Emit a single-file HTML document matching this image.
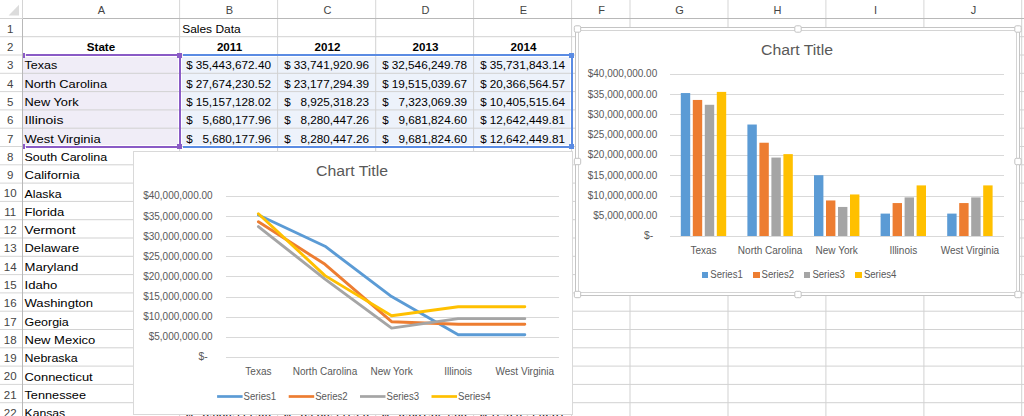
<!DOCTYPE html>
<html><head><meta charset="utf-8"><title>Sales Data</title>
<style>html,body{margin:0;padding:0;background:#fff;} body{width:1024px;height:416px;overflow:hidden;font-family:"Liberation Sans",sans-serif;} svg{display:block} text{shape-rendering:auto} polyline,line{shape-rendering:geometricPrecision}</style>
</head><body>
<svg width="1024" height="416" viewBox="0 0 1024 416" font-family='"Liberation Sans", sans-serif' shape-rendering="crispEdges"><rect x="0" y="0" width="1024" height="416" fill="#ffffff" />
<rect x="23" y="57" width="155" height="88" fill="#f0edf7" />
<rect x="182" y="57" width="388" height="88" fill="#edf2fb" />
<rect x="23" y="36.20" width="1001" height="1" fill="#d2d2d2" style="shape-rendering:geometricPrecision"/>
<rect x="0" y="36.20" width="22" height="1" fill="#d6d6d6" style="shape-rendering:geometricPrecision"/>
<rect x="23" y="54.50" width="1001" height="1" fill="#d2d2d2" style="shape-rendering:geometricPrecision"/>
<rect x="0" y="54.50" width="22" height="1" fill="#d6d6d6" style="shape-rendering:geometricPrecision"/>
<rect x="23" y="72.80" width="1001" height="1" fill="#d2d2d2" style="shape-rendering:geometricPrecision"/>
<rect x="0" y="72.80" width="22" height="1" fill="#d6d6d6" style="shape-rendering:geometricPrecision"/>
<rect x="23" y="91.10" width="1001" height="1" fill="#d2d2d2" style="shape-rendering:geometricPrecision"/>
<rect x="0" y="91.10" width="22" height="1" fill="#d6d6d6" style="shape-rendering:geometricPrecision"/>
<rect x="23" y="109.40" width="1001" height="1" fill="#d2d2d2" style="shape-rendering:geometricPrecision"/>
<rect x="0" y="109.40" width="22" height="1" fill="#d6d6d6" style="shape-rendering:geometricPrecision"/>
<rect x="23" y="127.70" width="1001" height="1" fill="#d2d2d2" style="shape-rendering:geometricPrecision"/>
<rect x="0" y="127.70" width="22" height="1" fill="#d6d6d6" style="shape-rendering:geometricPrecision"/>
<rect x="23" y="146.00" width="1001" height="1" fill="#d2d2d2" style="shape-rendering:geometricPrecision"/>
<rect x="0" y="146.00" width="22" height="1" fill="#d6d6d6" style="shape-rendering:geometricPrecision"/>
<rect x="23" y="164.30" width="1001" height="1" fill="#d2d2d2" style="shape-rendering:geometricPrecision"/>
<rect x="0" y="164.30" width="22" height="1" fill="#d6d6d6" style="shape-rendering:geometricPrecision"/>
<rect x="23" y="182.60" width="1001" height="1" fill="#d2d2d2" style="shape-rendering:geometricPrecision"/>
<rect x="0" y="182.60" width="22" height="1" fill="#d6d6d6" style="shape-rendering:geometricPrecision"/>
<rect x="23" y="200.90" width="1001" height="1" fill="#d2d2d2" style="shape-rendering:geometricPrecision"/>
<rect x="0" y="200.90" width="22" height="1" fill="#d6d6d6" style="shape-rendering:geometricPrecision"/>
<rect x="23" y="219.20" width="1001" height="1" fill="#d2d2d2" style="shape-rendering:geometricPrecision"/>
<rect x="0" y="219.20" width="22" height="1" fill="#d6d6d6" style="shape-rendering:geometricPrecision"/>
<rect x="23" y="237.50" width="1001" height="1" fill="#d2d2d2" style="shape-rendering:geometricPrecision"/>
<rect x="0" y="237.50" width="22" height="1" fill="#d6d6d6" style="shape-rendering:geometricPrecision"/>
<rect x="23" y="255.80" width="1001" height="1" fill="#d2d2d2" style="shape-rendering:geometricPrecision"/>
<rect x="0" y="255.80" width="22" height="1" fill="#d6d6d6" style="shape-rendering:geometricPrecision"/>
<rect x="23" y="274.10" width="1001" height="1" fill="#d2d2d2" style="shape-rendering:geometricPrecision"/>
<rect x="0" y="274.10" width="22" height="1" fill="#d6d6d6" style="shape-rendering:geometricPrecision"/>
<rect x="23" y="292.40" width="1001" height="1" fill="#d2d2d2" style="shape-rendering:geometricPrecision"/>
<rect x="0" y="292.40" width="22" height="1" fill="#d6d6d6" style="shape-rendering:geometricPrecision"/>
<rect x="23" y="310.70" width="1001" height="1" fill="#d2d2d2" style="shape-rendering:geometricPrecision"/>
<rect x="0" y="310.70" width="22" height="1" fill="#d6d6d6" style="shape-rendering:geometricPrecision"/>
<rect x="23" y="329.00" width="1001" height="1" fill="#d2d2d2" style="shape-rendering:geometricPrecision"/>
<rect x="0" y="329.00" width="22" height="1" fill="#d6d6d6" style="shape-rendering:geometricPrecision"/>
<rect x="23" y="347.30" width="1001" height="1" fill="#d2d2d2" style="shape-rendering:geometricPrecision"/>
<rect x="0" y="347.30" width="22" height="1" fill="#d6d6d6" style="shape-rendering:geometricPrecision"/>
<rect x="23" y="365.60" width="1001" height="1" fill="#d2d2d2" style="shape-rendering:geometricPrecision"/>
<rect x="0" y="365.60" width="22" height="1" fill="#d6d6d6" style="shape-rendering:geometricPrecision"/>
<rect x="23" y="383.90" width="1001" height="1" fill="#d2d2d2" style="shape-rendering:geometricPrecision"/>
<rect x="0" y="383.90" width="22" height="1" fill="#d6d6d6" style="shape-rendering:geometricPrecision"/>
<rect x="23" y="402.20" width="1001" height="1" fill="#d2d2d2" style="shape-rendering:geometricPrecision"/>
<rect x="0" y="402.20" width="22" height="1" fill="#d6d6d6" style="shape-rendering:geometricPrecision"/>
<rect x="179.10" y="19" width="1" height="397" fill="#d2d2d2" style="shape-rendering:geometricPrecision"/>
<rect x="179.10" y="0" width="1" height="18" fill="#d6d6d6" style="shape-rendering:geometricPrecision"/>
<rect x="277.10" y="19" width="1" height="397" fill="#d2d2d2" style="shape-rendering:geometricPrecision"/>
<rect x="277.10" y="0" width="1" height="18" fill="#d6d6d6" style="shape-rendering:geometricPrecision"/>
<rect x="375.20" y="19" width="1" height="397" fill="#d2d2d2" style="shape-rendering:geometricPrecision"/>
<rect x="375.20" y="0" width="1" height="18" fill="#d6d6d6" style="shape-rendering:geometricPrecision"/>
<rect x="473.10" y="19" width="1" height="397" fill="#d2d2d2" style="shape-rendering:geometricPrecision"/>
<rect x="473.10" y="0" width="1" height="18" fill="#d6d6d6" style="shape-rendering:geometricPrecision"/>
<rect x="571.10" y="19" width="1" height="397" fill="#d2d2d2" style="shape-rendering:geometricPrecision"/>
<rect x="571.10" y="0" width="1" height="18" fill="#d6d6d6" style="shape-rendering:geometricPrecision"/>
<rect x="629.50" y="19" width="1" height="397" fill="#d2d2d2" style="shape-rendering:geometricPrecision"/>
<rect x="629.50" y="0" width="1" height="18" fill="#d6d6d6" style="shape-rendering:geometricPrecision"/>
<rect x="727.50" y="19" width="1" height="397" fill="#d2d2d2" style="shape-rendering:geometricPrecision"/>
<rect x="727.50" y="0" width="1" height="18" fill="#d6d6d6" style="shape-rendering:geometricPrecision"/>
<rect x="825.40" y="19" width="1" height="397" fill="#d2d2d2" style="shape-rendering:geometricPrecision"/>
<rect x="825.40" y="0" width="1" height="18" fill="#d6d6d6" style="shape-rendering:geometricPrecision"/>
<rect x="923.40" y="19" width="1" height="397" fill="#d2d2d2" style="shape-rendering:geometricPrecision"/>
<rect x="923.40" y="0" width="1" height="18" fill="#d6d6d6" style="shape-rendering:geometricPrecision"/>
<rect x="1021.20" y="19" width="1" height="397" fill="#d2d2d2" style="shape-rendering:geometricPrecision"/>
<rect x="1021.20" y="0" width="1" height="18" fill="#d6d6d6" style="shape-rendering:geometricPrecision"/>
<rect x="23" y="18" width="1001" height="1" fill="#b8b8b8" />
<rect x="0" y="18" width="22" height="1" fill="#d4d4d4" />
<rect x="22" y="19" width="1" height="397" fill="#b8b8b8" />
<rect x="22" y="0" width="1" height="19" fill="#d4d4d4" />
<polygon points="8.6,15.6 19,15.6 19,4.8" fill="#dcdcdc" style="shape-rendering:geometricPrecision"/>
<text x="101.50" y="13.60" font-size="11" fill="#444444" text-anchor="middle" >A</text>
<text x="229.50" y="13.60" font-size="11" fill="#444444" text-anchor="middle" >B</text>
<text x="327.50" y="13.60" font-size="11" fill="#444444" text-anchor="middle" >C</text>
<text x="425.50" y="13.60" font-size="11" fill="#444444" text-anchor="middle" >D</text>
<text x="523.50" y="13.60" font-size="11" fill="#444444" text-anchor="middle" >E</text>
<text x="601.50" y="13.60" font-size="11" fill="#444444" text-anchor="middle" >F</text>
<text x="679.50" y="13.60" font-size="11" fill="#444444" text-anchor="middle" >G</text>
<text x="777.50" y="13.60" font-size="11" fill="#444444" text-anchor="middle" >H</text>
<text x="875.50" y="13.60" font-size="11" fill="#444444" text-anchor="middle" >I</text>
<text x="973.50" y="13.60" font-size="11" fill="#444444" text-anchor="middle" >J</text>
<text x="10.20" y="32.70" font-size="11.5" fill="#444444" text-anchor="middle" >1</text>
<text x="10.20" y="51.00" font-size="11.5" fill="#444444" text-anchor="middle" >2</text>
<text x="10.20" y="69.30" font-size="11.5" fill="#444444" text-anchor="middle" >3</text>
<text x="10.20" y="87.60" font-size="11.5" fill="#444444" text-anchor="middle" >4</text>
<text x="10.20" y="105.90" font-size="11.5" fill="#444444" text-anchor="middle" >5</text>
<text x="10.20" y="124.20" font-size="11.5" fill="#444444" text-anchor="middle" >6</text>
<text x="10.20" y="142.50" font-size="11.5" fill="#444444" text-anchor="middle" >7</text>
<text x="10.20" y="160.80" font-size="11.5" fill="#444444" text-anchor="middle" >8</text>
<text x="10.20" y="179.10" font-size="11.5" fill="#444444" text-anchor="middle" >9</text>
<text x="10.20" y="197.40" font-size="11.5" fill="#444444" text-anchor="middle" >10</text>
<text x="10.20" y="215.70" font-size="11.5" fill="#444444" text-anchor="middle" >11</text>
<text x="10.20" y="234.00" font-size="11.5" fill="#444444" text-anchor="middle" >12</text>
<text x="10.20" y="252.30" font-size="11.5" fill="#444444" text-anchor="middle" >13</text>
<text x="10.20" y="270.60" font-size="11.5" fill="#444444" text-anchor="middle" >14</text>
<text x="10.20" y="288.90" font-size="11.5" fill="#444444" text-anchor="middle" >15</text>
<text x="10.20" y="307.20" font-size="11.5" fill="#444444" text-anchor="middle" >16</text>
<text x="10.20" y="325.50" font-size="11.5" fill="#444444" text-anchor="middle" >17</text>
<text x="10.20" y="343.80" font-size="11.5" fill="#444444" text-anchor="middle" >18</text>
<text x="10.20" y="362.10" font-size="11.5" fill="#444444" text-anchor="middle" >19</text>
<text x="10.20" y="380.40" font-size="11.5" fill="#444444" text-anchor="middle" >20</text>
<text x="10.20" y="398.70" font-size="11.5" fill="#444444" text-anchor="middle" >21</text>
<text x="10.20" y="417.00" font-size="11.5" fill="#444444" text-anchor="middle" >22</text>
<text x="182.20" y="32.80" font-size="11.6" fill="#000" textLength="58.50" lengthAdjust="spacingAndGlyphs" >Sales Data</text>
<text x="101.00" y="51.10" font-size="11.6" fill="#000" text-anchor="middle" font-weight="bold" >State</text>
<text x="229.50" y="51.10" font-size="11.6" fill="#000" text-anchor="middle" font-weight="bold" >2011</text>
<text x="327.50" y="51.10" font-size="11.6" fill="#000" text-anchor="middle" font-weight="bold" >2012</text>
<text x="425.50" y="51.10" font-size="11.6" fill="#000" text-anchor="middle" font-weight="bold" >2013</text>
<text x="523.50" y="51.10" font-size="11.6" fill="#000" text-anchor="middle" font-weight="bold" >2014</text>
<text x="24.50" y="69.40" font-size="11.6" fill="#000" textLength="32.70" lengthAdjust="spacingAndGlyphs" >Texas</text>
<text x="24.50" y="87.70" font-size="11.6" fill="#000" textLength="82.50" lengthAdjust="spacingAndGlyphs" >North Carolina</text>
<text x="24.50" y="106.00" font-size="11.6" fill="#000" textLength="54.20" lengthAdjust="spacingAndGlyphs" >New York</text>
<text x="24.50" y="124.30" font-size="11.6" fill="#000" textLength="39.00" lengthAdjust="spacingAndGlyphs" >Illinois</text>
<text x="24.50" y="142.60" font-size="11.6" fill="#000" textLength="76.20" lengthAdjust="spacingAndGlyphs" >West Virginia</text>
<text x="24.50" y="160.90" font-size="11.6" fill="#000" textLength="82.70" lengthAdjust="spacingAndGlyphs" >South Carolina</text>
<text x="24.50" y="179.20" font-size="11.6" fill="#000" textLength="55.20" lengthAdjust="spacingAndGlyphs" >California</text>
<text x="24.50" y="197.50" font-size="11.6" fill="#000" textLength="37.00" lengthAdjust="spacingAndGlyphs" >Alaska</text>
<text x="24.50" y="215.80" font-size="11.6" fill="#000" textLength="39.80" lengthAdjust="spacingAndGlyphs" >Florida</text>
<text x="24.50" y="234.10" font-size="11.6" fill="#000" textLength="51.10" lengthAdjust="spacingAndGlyphs" >Vermont</text>
<text x="24.50" y="252.40" font-size="11.6" fill="#000" textLength="54.60" lengthAdjust="spacingAndGlyphs" >Delaware</text>
<text x="24.50" y="270.70" font-size="11.6" fill="#000" textLength="53.90" lengthAdjust="spacingAndGlyphs" >Maryland</text>
<text x="24.50" y="289.00" font-size="11.6" fill="#000" textLength="32.80" lengthAdjust="spacingAndGlyphs" >Idaho</text>
<text x="24.50" y="307.30" font-size="11.6" fill="#000" textLength="68.60" lengthAdjust="spacingAndGlyphs" >Washington</text>
<text x="24.50" y="325.60" font-size="11.6" fill="#000" textLength="44.30" lengthAdjust="spacingAndGlyphs" >Georgia</text>
<text x="24.50" y="343.90" font-size="11.6" fill="#000" textLength="70.80" lengthAdjust="spacingAndGlyphs" >New Mexico</text>
<text x="24.50" y="362.20" font-size="11.6" fill="#000" textLength="53.20" lengthAdjust="spacingAndGlyphs" >Nebraska</text>
<text x="24.50" y="380.50" font-size="11.6" fill="#000" textLength="68.20" lengthAdjust="spacingAndGlyphs" >Connecticut</text>
<text x="24.50" y="398.80" font-size="11.6" fill="#000" textLength="61.50" lengthAdjust="spacingAndGlyphs" >Tennessee</text>
<text x="24.50" y="417.10" font-size="11.6" fill="#000" textLength="40.70" lengthAdjust="spacingAndGlyphs" >Kansas</text>
<text x="186.20" y="69.40" font-size="11.6" fill="#000" >$</text>
<text x="271.00" y="69.40" font-size="11.6" fill="#000" text-anchor="end" textLength="75.34" lengthAdjust="spacingAndGlyphs" >35,443,672.40</text>
<text x="284.20" y="69.40" font-size="11.6" fill="#000" >$</text>
<text x="369.00" y="69.40" font-size="11.6" fill="#000" text-anchor="end" textLength="75.34" lengthAdjust="spacingAndGlyphs" >33,741,920.96</text>
<text x="382.20" y="69.40" font-size="11.6" fill="#000" >$</text>
<text x="467.00" y="69.40" font-size="11.6" fill="#000" text-anchor="end" textLength="75.34" lengthAdjust="spacingAndGlyphs" >32,546,249.78</text>
<text x="480.20" y="69.40" font-size="11.6" fill="#000" >$</text>
<text x="565.00" y="69.40" font-size="11.6" fill="#000" text-anchor="end" textLength="75.34" lengthAdjust="spacingAndGlyphs" >35,731,843.14</text>
<text x="186.20" y="87.70" font-size="11.6" fill="#000" >$</text>
<text x="271.00" y="87.70" font-size="11.6" fill="#000" text-anchor="end" textLength="75.34" lengthAdjust="spacingAndGlyphs" >27,674,230.52</text>
<text x="284.20" y="87.70" font-size="11.6" fill="#000" >$</text>
<text x="369.00" y="87.70" font-size="11.6" fill="#000" text-anchor="end" textLength="75.34" lengthAdjust="spacingAndGlyphs" >23,177,294.39</text>
<text x="382.20" y="87.70" font-size="11.6" fill="#000" >$</text>
<text x="467.00" y="87.70" font-size="11.6" fill="#000" text-anchor="end" textLength="75.34" lengthAdjust="spacingAndGlyphs" >19,515,039.67</text>
<text x="480.20" y="87.70" font-size="11.6" fill="#000" >$</text>
<text x="565.00" y="87.70" font-size="11.6" fill="#000" text-anchor="end" textLength="75.34" lengthAdjust="spacingAndGlyphs" >20,366,564.57</text>
<text x="186.20" y="106.00" font-size="11.6" fill="#000" >$</text>
<text x="271.00" y="106.00" font-size="11.6" fill="#000" text-anchor="end" textLength="75.34" lengthAdjust="spacingAndGlyphs" >15,157,128.02</text>
<text x="284.20" y="106.00" font-size="11.6" fill="#000" >$</text>
<text x="369.00" y="106.00" font-size="11.6" fill="#000" text-anchor="end" textLength="68.56" lengthAdjust="spacingAndGlyphs" >8,925,318.23</text>
<text x="382.20" y="106.00" font-size="11.6" fill="#000" >$</text>
<text x="467.00" y="106.00" font-size="11.6" fill="#000" text-anchor="end" textLength="68.56" lengthAdjust="spacingAndGlyphs" >7,323,069.39</text>
<text x="480.20" y="106.00" font-size="11.6" fill="#000" >$</text>
<text x="565.00" y="106.00" font-size="11.6" fill="#000" text-anchor="end" textLength="75.34" lengthAdjust="spacingAndGlyphs" >10,405,515.64</text>
<text x="186.20" y="124.30" font-size="11.6" fill="#000" >$</text>
<text x="271.00" y="124.30" font-size="11.6" fill="#000" text-anchor="end" textLength="68.56" lengthAdjust="spacingAndGlyphs" >5,680,177.96</text>
<text x="284.20" y="124.30" font-size="11.6" fill="#000" >$</text>
<text x="369.00" y="124.30" font-size="11.6" fill="#000" text-anchor="end" textLength="68.56" lengthAdjust="spacingAndGlyphs" >8,280,447.26</text>
<text x="382.20" y="124.30" font-size="11.6" fill="#000" >$</text>
<text x="467.00" y="124.30" font-size="11.6" fill="#000" text-anchor="end" textLength="68.56" lengthAdjust="spacingAndGlyphs" >9,681,824.60</text>
<text x="480.20" y="124.30" font-size="11.6" fill="#000" >$</text>
<text x="565.00" y="124.30" font-size="11.6" fill="#000" text-anchor="end" textLength="75.34" lengthAdjust="spacingAndGlyphs" >12,642,449.81</text>
<text x="186.20" y="142.60" font-size="11.6" fill="#000" >$</text>
<text x="271.00" y="142.60" font-size="11.6" fill="#000" text-anchor="end" textLength="68.56" lengthAdjust="spacingAndGlyphs" >5,680,177.96</text>
<text x="284.20" y="142.60" font-size="11.6" fill="#000" >$</text>
<text x="369.00" y="142.60" font-size="11.6" fill="#000" text-anchor="end" textLength="68.56" lengthAdjust="spacingAndGlyphs" >8,280,447.26</text>
<text x="382.20" y="142.60" font-size="11.6" fill="#000" >$</text>
<text x="467.00" y="142.60" font-size="11.6" fill="#000" text-anchor="end" textLength="68.56" lengthAdjust="spacingAndGlyphs" >9,681,824.60</text>
<text x="480.20" y="142.60" font-size="11.6" fill="#000" >$</text>
<text x="565.00" y="142.60" font-size="11.6" fill="#000" text-anchor="end" textLength="75.34" lengthAdjust="spacingAndGlyphs" >12,642,449.81</text>
<text x="186.20" y="417.10" font-size="11.6" fill="#000" >$</text>
<text x="271.00" y="417.10" font-size="11.6" fill="#000" text-anchor="end" textLength="68.56" lengthAdjust="spacingAndGlyphs" >5,680,177.96</text>
<text x="284.20" y="417.10" font-size="11.6" fill="#000" >$</text>
<text x="369.00" y="417.10" font-size="11.6" fill="#000" text-anchor="end" textLength="68.56" lengthAdjust="spacingAndGlyphs" >8,280,447.26</text>
<text x="382.20" y="417.10" font-size="11.6" fill="#000" >$</text>
<text x="467.00" y="417.10" font-size="11.6" fill="#000" text-anchor="end" textLength="68.56" lengthAdjust="spacingAndGlyphs" >9,681,824.60</text>
<text x="480.20" y="417.10" font-size="11.6" fill="#000" >$</text>
<text x="565.00" y="417.10" font-size="11.6" fill="#000" text-anchor="end" textLength="75.34" lengthAdjust="spacingAndGlyphs" >12,642,449.81</text>
<rect x="26" y="54" width="154" height="2" fill="#8a5bc6" />
<rect x="26" y="146" width="154" height="2" fill="#8a5bc6" />
<rect x="179" y="54" width="2" height="94" fill="#8a5bc6" />
<rect x="177" y="53" width="5" height="5" fill="#8a5bc6" />
<rect x="177" y="144" width="5" height="5" fill="#8a5bc6" />
<rect x="23" y="53" width="2" height="5" fill="#8a5bc6" />
<rect x="23" y="144" width="2" height="5" fill="#8a5bc6" />
<rect x="183" y="54" width="389" height="2" fill="#5a8be3" />
<rect x="183" y="146" width="389" height="2" fill="#5a8be3" />
<rect x="571" y="54" width="2" height="94" fill="#5a8be3" />
<rect x="569" y="53" width="5" height="5" fill="#5a8be3" />
<rect x="569" y="144" width="5" height="5" fill="#5a8be3" />
<rect x="133.5" y="151.5" width="439" height="263" fill="#ffffff" stroke="#d9d9d9" stroke-width="1"/>
<text x="352.00" y="176.20" font-size="15.3" fill="#595959" text-anchor="middle" textLength="72.00" lengthAdjust="spacingAndGlyphs" >Chart Title</text>
<rect x="226" y="196" width="333" height="1" fill="#d9d9d9" />
<text x="212.60" y="199.40" font-size="10" fill="#595959" text-anchor="end" textLength="69.44" lengthAdjust="spacingAndGlyphs" >$40,000,000.00</text>
<rect x="226" y="216" width="333" height="1" fill="#d9d9d9" />
<text x="212.60" y="219.53" font-size="10" fill="#595959" text-anchor="end" textLength="69.44" lengthAdjust="spacingAndGlyphs" >$35,000,000.00</text>
<rect x="226" y="236" width="333" height="1" fill="#d9d9d9" />
<text x="212.60" y="239.65" font-size="10" fill="#595959" text-anchor="end" textLength="69.44" lengthAdjust="spacingAndGlyphs" >$30,000,000.00</text>
<rect x="226" y="256" width="333" height="1" fill="#d9d9d9" />
<text x="212.60" y="259.77" font-size="10" fill="#595959" text-anchor="end" textLength="69.44" lengthAdjust="spacingAndGlyphs" >$25,000,000.00</text>
<rect x="226" y="276" width="333" height="1" fill="#d9d9d9" />
<text x="212.60" y="279.90" font-size="10" fill="#595959" text-anchor="end" textLength="69.44" lengthAdjust="spacingAndGlyphs" >$20,000,000.00</text>
<rect x="226" y="297" width="333" height="1" fill="#d9d9d9" />
<text x="212.60" y="300.02" font-size="10" fill="#595959" text-anchor="end" textLength="69.44" lengthAdjust="spacingAndGlyphs" >$15,000,000.00</text>
<rect x="226" y="317" width="333" height="1" fill="#d9d9d9" />
<text x="212.60" y="320.15" font-size="10" fill="#595959" text-anchor="end" textLength="69.44" lengthAdjust="spacingAndGlyphs" >$10,000,000.00</text>
<rect x="226" y="337" width="333" height="1" fill="#d9d9d9" />
<text x="212.60" y="340.27" font-size="10" fill="#595959" text-anchor="end" textLength="63.88" lengthAdjust="spacingAndGlyphs" >$5,000,000.00</text>
<rect x="226" y="357" width="333" height="1" fill="#d9d9d9" />
<text x="207.60" y="360.40" font-size="10" fill="#595959" text-anchor="end" textLength="9.20" lengthAdjust="spacingAndGlyphs" >$-</text>
<text x="258.40" y="374.50" font-size="10" fill="#595959" text-anchor="middle" >Texas</text>
<text x="325.00" y="374.50" font-size="10" fill="#595959" text-anchor="middle" >North Carolina</text>
<text x="391.60" y="374.50" font-size="10" fill="#595959" text-anchor="middle" >New York</text>
<text x="458.20" y="374.50" font-size="10" fill="#595959" text-anchor="middle" >Illinois</text>
<text x="524.80" y="374.50" font-size="10" fill="#595959" text-anchor="middle" >West Virginia</text>
<polyline points="258.40,214.94 325.00,246.21 391.60,296.59 458.20,334.74 524.80,334.74" fill="none" stroke="#5b9bd5" stroke-width="2.9" stroke-linejoin="round" stroke-linecap="round"/>
<polyline points="258.40,221.79 325.00,264.31 391.60,321.68 458.20,324.27 524.80,324.27" fill="none" stroke="#ed7d31" stroke-width="2.9" stroke-linejoin="round" stroke-linecap="round"/>
<polyline points="258.40,226.60 325.00,279.05 391.60,328.12 458.20,318.63 524.80,318.63" fill="none" stroke="#a5a5a5" stroke-width="2.9" stroke-linejoin="round" stroke-linecap="round"/>
<polyline points="258.40,213.78 325.00,275.62 391.60,315.72 458.20,306.71 524.80,306.71" fill="none" stroke="#ffc000" stroke-width="2.9" stroke-linejoin="round" stroke-linecap="round"/>
<line x1="217.1" y1="396.5" x2="242.6" y2="396.5" stroke="#5b9bd5" stroke-width="2.7"/>
<text x="243.60" y="400.00" font-size="10" fill="#595959" textLength="32.50" lengthAdjust="spacingAndGlyphs" >Series1</text>
<line x1="288.7" y1="396.5" x2="314.2" y2="396.5" stroke="#ed7d31" stroke-width="2.7"/>
<text x="315.20" y="400.00" font-size="10" fill="#595959" textLength="32.50" lengthAdjust="spacingAndGlyphs" >Series2</text>
<line x1="360" y1="396.5" x2="385.5" y2="396.5" stroke="#a5a5a5" stroke-width="2.7"/>
<text x="386.50" y="400.00" font-size="10" fill="#595959" textLength="32.50" lengthAdjust="spacingAndGlyphs" >Series3</text>
<line x1="431.5" y1="396.5" x2="457.0" y2="396.5" stroke="#ffc000" stroke-width="2.7"/>
<text x="458.00" y="400.00" font-size="10" fill="#595959" textLength="32.50" lengthAdjust="spacingAndGlyphs" >Series4</text>
<rect x="575.5" y="27.5" width="444" height="268" fill="#ffffff" stroke="#c4c4c4" stroke-width="1"/>
<rect x="578.5" y="30.5" width="438" height="262" fill="none" stroke="#d4d4d4" stroke-width="1"/>
<text x="797.00" y="54.70" font-size="15.3" fill="#595959" text-anchor="middle" textLength="72.00" lengthAdjust="spacingAndGlyphs" >Chart Title</text>
<rect x="670" y="74" width="334" height="1" fill="#d9d9d9" />
<text x="657.20" y="77.40" font-size="10" fill="#595959" text-anchor="end" textLength="69.44" lengthAdjust="spacingAndGlyphs" >$40,000,000.00</text>
<rect x="670" y="94" width="334" height="1" fill="#d9d9d9" />
<text x="657.20" y="97.65" font-size="10" fill="#595959" text-anchor="end" textLength="69.44" lengthAdjust="spacingAndGlyphs" >$35,000,000.00</text>
<rect x="670" y="114" width="334" height="1" fill="#d9d9d9" />
<text x="657.20" y="117.90" font-size="10" fill="#595959" text-anchor="end" textLength="69.44" lengthAdjust="spacingAndGlyphs" >$30,000,000.00</text>
<rect x="670" y="135" width="334" height="1" fill="#d9d9d9" />
<text x="657.20" y="138.15" font-size="10" fill="#595959" text-anchor="end" textLength="69.44" lengthAdjust="spacingAndGlyphs" >$25,000,000.00</text>
<rect x="670" y="155" width="334" height="1" fill="#d9d9d9" />
<text x="657.20" y="158.40" font-size="10" fill="#595959" text-anchor="end" textLength="69.44" lengthAdjust="spacingAndGlyphs" >$20,000,000.00</text>
<rect x="670" y="175" width="334" height="1" fill="#d9d9d9" />
<text x="657.20" y="178.65" font-size="10" fill="#595959" text-anchor="end" textLength="69.44" lengthAdjust="spacingAndGlyphs" >$15,000,000.00</text>
<rect x="670" y="196" width="334" height="1" fill="#d9d9d9" />
<text x="657.20" y="198.90" font-size="10" fill="#595959" text-anchor="end" textLength="69.44" lengthAdjust="spacingAndGlyphs" >$10,000,000.00</text>
<rect x="670" y="216" width="334" height="1" fill="#d9d9d9" />
<text x="657.20" y="219.15" font-size="10" fill="#595959" text-anchor="end" textLength="63.88" lengthAdjust="spacingAndGlyphs" >$5,000,000.00</text>
<rect x="670" y="236" width="334" height="1" fill="#d9d9d9" />
<text x="653.20" y="239.40" font-size="10" fill="#595959" text-anchor="end" textLength="9.20" lengthAdjust="spacingAndGlyphs" >$-</text>
<text x="703.50" y="253.50" font-size="10" fill="#595959" text-anchor="middle" >Texas</text>
<text x="770.10" y="253.50" font-size="10" fill="#595959" text-anchor="middle" >North Carolina</text>
<text x="836.70" y="253.50" font-size="10" fill="#595959" text-anchor="middle" >New York</text>
<text x="903.30" y="253.50" font-size="10" fill="#595959" text-anchor="middle" >Illinois</text>
<text x="969.90" y="253.50" font-size="10" fill="#595959" text-anchor="middle" >West Virginia</text>
<rect x="680.80" y="93.05" width="9.4" height="142.95" fill="#5b9bd5" style="shape-rendering:geometricPrecision"/>
<rect x="747.40" y="124.52" width="9.4" height="111.48" fill="#5b9bd5" style="shape-rendering:geometricPrecision"/>
<rect x="814.00" y="175.21" width="9.4" height="60.79" fill="#5b9bd5" style="shape-rendering:geometricPrecision"/>
<rect x="880.60" y="213.60" width="9.4" height="22.40" fill="#5b9bd5" style="shape-rendering:geometricPrecision"/>
<rect x="947.20" y="213.60" width="9.4" height="22.40" fill="#5b9bd5" style="shape-rendering:geometricPrecision"/>
<rect x="692.80" y="99.95" width="9.4" height="136.05" fill="#ed7d31" style="shape-rendering:geometricPrecision"/>
<rect x="759.40" y="142.73" width="9.4" height="93.27" fill="#ed7d31" style="shape-rendering:geometricPrecision"/>
<rect x="826.00" y="200.45" width="9.4" height="35.55" fill="#ed7d31" style="shape-rendering:geometricPrecision"/>
<rect x="892.60" y="203.06" width="9.4" height="32.94" fill="#ed7d31" style="shape-rendering:geometricPrecision"/>
<rect x="959.20" y="203.06" width="9.4" height="32.94" fill="#ed7d31" style="shape-rendering:geometricPrecision"/>
<rect x="704.80" y="104.79" width="9.4" height="131.21" fill="#a5a5a5" style="shape-rendering:geometricPrecision"/>
<rect x="771.40" y="157.56" width="9.4" height="78.44" fill="#a5a5a5" style="shape-rendering:geometricPrecision"/>
<rect x="838.00" y="206.94" width="9.4" height="29.06" fill="#a5a5a5" style="shape-rendering:geometricPrecision"/>
<rect x="904.60" y="197.39" width="9.4" height="38.61" fill="#a5a5a5" style="shape-rendering:geometricPrecision"/>
<rect x="971.20" y="197.39" width="9.4" height="38.61" fill="#a5a5a5" style="shape-rendering:geometricPrecision"/>
<rect x="716.80" y="91.89" width="9.4" height="144.11" fill="#ffc000" style="shape-rendering:geometricPrecision"/>
<rect x="783.40" y="154.12" width="9.4" height="81.88" fill="#ffc000" style="shape-rendering:geometricPrecision"/>
<rect x="850.00" y="194.46" width="9.4" height="41.54" fill="#ffc000" style="shape-rendering:geometricPrecision"/>
<rect x="916.60" y="185.40" width="9.4" height="50.60" fill="#ffc000" style="shape-rendering:geometricPrecision"/>
<rect x="983.20" y="185.40" width="9.4" height="50.60" fill="#ffc000" style="shape-rendering:geometricPrecision"/>
<rect x="670" y="236" width="334" height="1" fill="#d9d9d9" />
<rect x="701.8" y="271.8" width="6.5" height="6.5" fill="#5b9bd5" />
<text x="710.30" y="277.90" font-size="10" fill="#595959" textLength="32.50" lengthAdjust="spacingAndGlyphs" >Series1</text>
<rect x="753.0" y="271.8" width="6.5" height="6.5" fill="#ed7d31" />
<text x="761.50" y="277.90" font-size="10" fill="#595959" textLength="32.50" lengthAdjust="spacingAndGlyphs" >Series2</text>
<rect x="803.9" y="271.8" width="6.5" height="6.5" fill="#a5a5a5" />
<text x="812.40" y="277.90" font-size="10" fill="#595959" textLength="32.50" lengthAdjust="spacingAndGlyphs" >Series3</text>
<rect x="855.4" y="271.8" width="6.5" height="6.5" fill="#ffc000" />
<text x="863.90" y="277.90" font-size="10" fill="#595959" textLength="32.50" lengthAdjust="spacingAndGlyphs" >Series4</text>
<rect x="574.3" y="25.8" width="6.4" height="6.4" rx="1.5" fill="#ffffff" stroke="#c2c2c2" stroke-width="1" style="shape-rendering:geometricPrecision"/>
<rect x="574.3" y="158.3" width="6.4" height="6.4" rx="1.5" fill="#ffffff" stroke="#c2c2c2" stroke-width="1" style="shape-rendering:geometricPrecision"/>
<rect x="574.3" y="291.3" width="6.4" height="6.4" rx="1.5" fill="#ffffff" stroke="#c2c2c2" stroke-width="1" style="shape-rendering:geometricPrecision"/>
<rect x="794.8" y="25.8" width="6.4" height="6.4" rx="1.5" fill="#ffffff" stroke="#c2c2c2" stroke-width="1" style="shape-rendering:geometricPrecision"/>
<rect x="794.8" y="291.3" width="6.4" height="6.4" rx="1.5" fill="#ffffff" stroke="#c2c2c2" stroke-width="1" style="shape-rendering:geometricPrecision"/>
<rect x="1014.8" y="25.8" width="6.4" height="6.4" rx="1.5" fill="#ffffff" stroke="#c2c2c2" stroke-width="1" style="shape-rendering:geometricPrecision"/>
<rect x="1014.8" y="158.3" width="6.4" height="6.4" rx="1.5" fill="#ffffff" stroke="#c2c2c2" stroke-width="1" style="shape-rendering:geometricPrecision"/>
<rect x="1014.8" y="291.3" width="6.4" height="6.4" rx="1.5" fill="#ffffff" stroke="#c2c2c2" stroke-width="1" style="shape-rendering:geometricPrecision"/></svg>
</body></html>
